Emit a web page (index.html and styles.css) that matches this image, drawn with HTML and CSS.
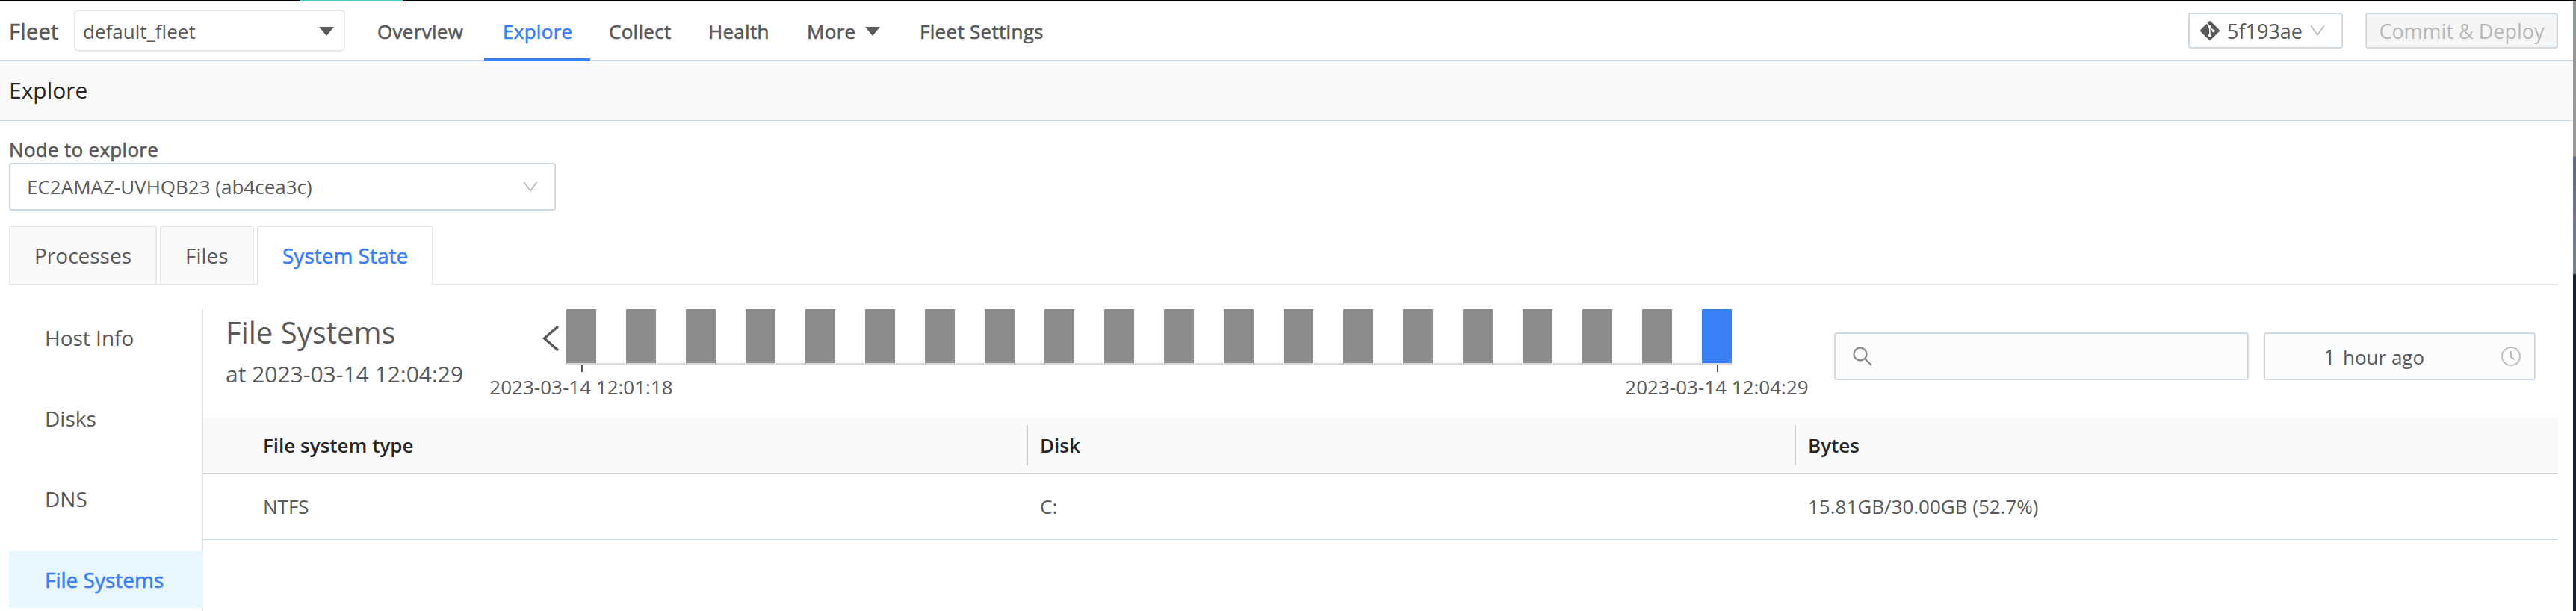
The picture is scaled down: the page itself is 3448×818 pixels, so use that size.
FILE: index.html
```
<!DOCTYPE html>
<html lang="en">
<head>
  <meta charset="UTF-8" />
  <meta name="viewport" content="width=device-width, initial-scale=1.0" />
  <title>Fleet - Explore</title>
  <link rel="stylesheet" href="styles.css">
</head>
<body>
  <div class="browser-edge"><span class="loaded"></span></div>
  <div class="window">
    <div class="app">
      <!-- Top navigation -->
      <header class="topbar">
        <span class="brand">Fleet</span>
        <div class="fleet-select"><span>default_fleet</span>
          <svg class="caret" viewBox="0 0 20 12"><path d="M0 0h20L10 12z"/></svg>
        </div>
        <nav class="nav">
          <a class="nav-item overview">Overview</a>
          <a class="nav-item explore active">Explore</a>
          <a class="nav-item collect">Collect</a>
          <a class="nav-item health">Health</a>
          <a class="nav-item more">More <svg class="caret" viewBox="0 0 20 12"><path d="M0 0h20L10 12z"/></svg></a>
          <a class="nav-item settings">Fleet Settings</a>
        </nav>
        <div class="actions">
          <div class="commit-select">
            <svg class="git" viewBox="0 0 26 26">
              <path d="M11.6.8a2 2 0 0 1 2.8 0l10.8 10.8a2 2 0 0 1 0 2.8L14.4 25.2a2 2 0 0 1-2.8 0L.8 14.4a2 2 0 0 1 0-2.8z"/>
              <path class="branch" d="M8.800 3.100l4 4.700v11M13 8.500l5 5"/>
              <circle class="node" cx="12.800" cy="8" r="1.900"/>
              <circle class="node" cx="17.600" cy="13.300" r="1.900"/>
              <circle class="node" cx="12.800" cy="19.500" r="1.900"/>
            </svg>
            <span class="hash">5f193ae</span>
            <svg class="chevron" viewBox="0 0 20 14"><path d="M1 .5l9 12 9-12"/></svg>
          </div>
          <button class="deploy" disabled>Commit &amp; Deploy</button>
        </div>
      </header>

      <div class="page-title">Explore</div>

      <main class="content">
        <div class="node-label">Node to explore</div>
        <div class="node-select"><span>EC2AMAZ-UVHQB23 (ab4cea3c)</span>
          <svg class="chevron" viewBox="0 0 20 14"><path d="M1 .5l9 12 9-12"/></svg>
        </div>

        <div class="tabs">
          <div class="tab processes">Processes</div>
          <div class="tab files">Files</div>
          <div class="tab state active">System State</div>
        </div>

        <div class="panel">
          <ul class="menu">
            <li>Host Info</li>
            <li>Disks</li>
            <li>DNS</li>
            <li class="active">File Systems</li>
          </ul>

          <section class="main">
            <div class="summary">
              <div class="heading">
                <h1>File Systems</h1>
                <p>at 2023-03-14 12:04:29</p>
              </div>
              <!-- Snapshot timeline -->
              <svg class="prev" viewBox="0 0 22 34"><path d="M21 1L2.500 17 21 33"/></svg>
              <div class="timeline">
                <div class="bars">
                  <i></i><i></i><i></i><i></i><i></i><i></i><i></i><i></i><i></i><i></i>
                  <i></i><i></i><i></i><i></i><i></i><i></i><i></i><i></i><i></i><i class="current"></i>
                </div>
                <div class="ticks">
                  <div class="tick"><span>2023-03-14 12:01:18</span></div>
                  <div class="tick"><span>2023-03-14 12:04:29</span></div>
                </div>
              </div>
              <div class="search">
                <svg viewBox="0 0 26 26"><circle cx="10" cy="10" r="8.500"/><path d="M16 16l9 9"/></svg>
              </div>
              <div class="time">
                <span class="ago"><span class="count">1</span><span>hour ago</span></span>
                <svg viewBox="0 0 26 26"><circle cx="13" cy="13" r="12"/><path d="M13 6v8l5 3.500"/></svg>
              </div>
            </div>

            <table class="grid">
              <thead>
                <tr><th class="type">File system type</th><th class="disk"><div>Disk</div></th><th><div>Bytes</div></th></tr>
              </thead>
              <tbody>
                <tr><td class="type">NTFS</td><td>C:</td><td>15.81GB/30.00GB (52.7%)</td></tr>
              </tbody>
            </table>
          </section>
        </div>
      </main>
    </div>
    <div class="desktop-edge"></div>
  </div>
</body>
</html>
```
FILE: styles.css
```
* {
  box-sizing: border-box;
}
body {
  margin: 0;
  background: #fff;
  font-family: "Open Sans", "Noto Sans", sans-serif;
  font-size: 26px;
  color: #595959;
  height: 818px;
  overflow: hidden;
  white-space: nowrap;
}
svg {
  display: block;
  flex: none;
}
.browser-edge {
  height: 2px;
  background: #000;
  padding-left: 402px;
}
.loaded {
  display: block;
  width: 137px;
  height: 2px;
  background: #56c4c5;
}
.window {
  display: flex;
  height: 816px;
}
.app {
  flex: 1;
  min-width: 0;
}
.desktop-edge {
  width: 4px;
  background: linear-gradient(#959999 0, #9a9a98 207px, #5f6b85 208px, #7f808d 364px, #182236 366px);
}

/* Top navigation */
.topbar {
  display: flex;
  align-items: center;
  height: 80px;
  padding: 0 20px 0 12px;
  border-bottom: 2px solid #cfd9e1;
}
/* Medium weight */
.brand,
.nav-item,
.node-label,
.tab.active,
.menu li.active {
  -webkit-text-stroke: 0.6px currentColor;
}
.brand,
.nav-item,
.node-label {
  letter-spacing: 0.3px;
}
.brand {
  width: 87px;
  font-size: 29px;
}
.fleet-select {
  display: flex;
  align-items: center;
  justify-content: space-between;
  width: 363px;
  height: 56px;
  padding: 2px 13px 0 10px;
  border: 2px solid #e8e8e8;
  border-radius: 6px;
}
.caret {
  width: 20px;
  height: 12px;
  fill: #595959;
}
.nav {
  display: flex;
  align-self: stretch;
  margin-left: 18px;
}
.nav-item {
  display: flex;
  align-items: center;
  height: 80px;
  padding-left: 25px;
  border-bottom: 4px solid transparent;
  padding-top: 4px;
}
.overview { width: 168px; }
.explore { width: 142px; }
.collect { width: 133px; }
.health { width: 132px; }
.more { width: 151px; gap: 13px; }
.nav-item.active {
  color: #397ff7;
  border-bottom-color: #397ff7;
}
.actions {
  display: flex;
  gap: 30px;
  margin-left: auto;
  font-size: 27px;
}
.commit-select {
  display: flex;
  align-items: center;
  width: 207px;
  height: 48px;
  padding-left: 14px;
  border: 2px solid #cfd9e1;
  border-radius: 4px;
}
.git {
  width: 26px;
  height: 26px;
  fill: #595959;
}
.git .branch {
  fill: none;
  stroke: #fff;
  stroke-width: 1.6;
}
.git .node {
  fill: #fff;
}
.hash {
  flex: none;
  width: 121px;
  padding-left: 10px;
}
.chevron {
  width: 20px;
  height: 14px;
  fill: none;
  stroke: #bfbfbf;
  stroke-width: 2;
}
.deploy {
  width: 258px;
  height: 48px;
  padding: 0;
  border: 2px solid #cfd9e1;
  border-radius: 4px;
  background: #f5f5f5;
  color: #b8b8b8;
  font: inherit;
}
.page-title {
  display: flex;
  align-items: center;
  height: 80px;
  padding: 0 0 2px 12px;
  background: #fafafa;
  border-bottom: 2px solid #cfd9e1;
  font-size: 30px;
  color: #262626;
}

/* Node picker and tabs */
.content {
  padding: 20px 20px 0 12px;
}
.node-label {
  height: 36px;
  line-height: 36px;
}
.node-select {
  display: flex;
  align-items: center;
  justify-content: space-between;
  width: 732px;
  height: 64px;
  padding: 0 22px;
  border: 2px solid #cfd9e1;
  border-radius: 4px;
}
.tabs {
  display: flex;
  gap: 4px;
  height: 80px;
  margin-top: 20px;
  border-bottom: 2px solid #e8e8e8;
  font-size: 28px;
}
.tab {
  height: 80px;
  padding-left: 32px;
  line-height: 76px;
  border: 2px solid #e8e8e8;
  border-radius: 4px 4px 0 0;
  background: #fafafa;
}
.processes { width: 198px; }
.files { width: 126px; }
.state { width: 236px; }
.tab.active {
  background: #fff;
  border-bottom-color: #fff;
  color: #397ff7;
}
.panel {
  display: flex;
  height: 436px;
  padding-top: 32px;
}
.menu {
  display: flex;
  flex-direction: column;
  gap: 32px;
  width: 260px;
  margin: 0;
  padding: 0;
  border-right: 2px solid #e8e8e8;
  list-style: none;
  font-size: 28px;
}
.menu li {
  height: 76px;
  padding-left: 48px;
  line-height: 76px;
}
.menu li.active {
  margin-right: -2px;
  background: #e7f6ff;
  color: #397ff7;
}
.main {
  flex: 1;
  min-width: 0;
}

/* Snapshot timeline */
.summary {
  display: flex;
  height: 145px;
}
.heading {
  width: 454px;
  padding-left: 30px;
}
h1 {
  margin: 3px 0 0;
  font-size: 40px;
  line-height: 56px;
  font-weight: 400;
}
p {
  margin: 7px 0 0;
  font-size: 30px;
  line-height: 42px;
}
.prev {
  width: 22px;
  height: 34px;
  margin: 22px 10px 0 0;
  fill: none;
  stroke: #595959;
  stroke-width: 3.4;
}
.timeline {
  width: 1560px;
}
.bars {
  display: flex;
  justify-content: space-between;
  height: 74px;
  border-bottom: 2px solid #d9d9d9;
}
.bars i {
  width: 40px;
  background: #8c8c8c;
}
.bars i.current {
  background: #397ff7;
}
.ticks {
  display: flex;
  justify-content: space-between;
}
.tick {
  display: flex;
  flex-direction: column;
  align-items: center;
  width: 40px;
  line-height: 36px;
}
.tick::before {
  content: "";
  width: 2px;
  height: 10px;
  margin-left: 2px;
  background: #595959;
}
.tick span {
  margin-top: 2px;
}
.search,
.time {
  display: flex;
  align-items: center;
  height: 64px;
  margin-top: 31px;
  border: 2px solid #cfd9e1;
  border-radius: 4px;
  background: #fbfcfe;
}
.search {
  width: 555px;
  margin-left: 137px;
  padding-left: 23px;
}
.search svg,
.time svg {
  width: 26px;
  height: 26px;
  fill: none;
  stroke: #8c8c8c;
  stroke-width: 2.4;
}
.time {
  width: 364px;
  margin-left: 20px;
  padding: 0 18px 0 78px;
  justify-content: space-between;
}
.ago {
  display: flex;
  align-items: baseline;
  gap: 10px;
}
.count {
  font-size: 28px;
}
.time svg {
  stroke: #bfbfbf;
  stroke-width: 2;
}

/* File system table */
.grid {
  width: 3152px;
  border-collapse: separate;
  border-spacing: 0;
  table-layout: fixed;
}
.grid th,
.grid td {
  padding: 0 0 0 18px;
  text-align: left;
}
.grid th {
  height: 76px;
  background: #fafafa;
  border-bottom: 2px solid #d3d3d3;
  color: #262626;
  font-weight: 600;
}
.grid td {
  height: 88px;
  border-bottom: 2px solid #cfd9e1;
}
.grid .type {
  width: 1102px;
  padding-left: 80px;
}
.grid .disk {
  width: 1028px;
}
.grid th div {
  height: 54px;
  margin-left: -18px;
  padding-left: 16px;
  border-left: 2px solid #d3d3d3;
  line-height: 54px;
}
```
